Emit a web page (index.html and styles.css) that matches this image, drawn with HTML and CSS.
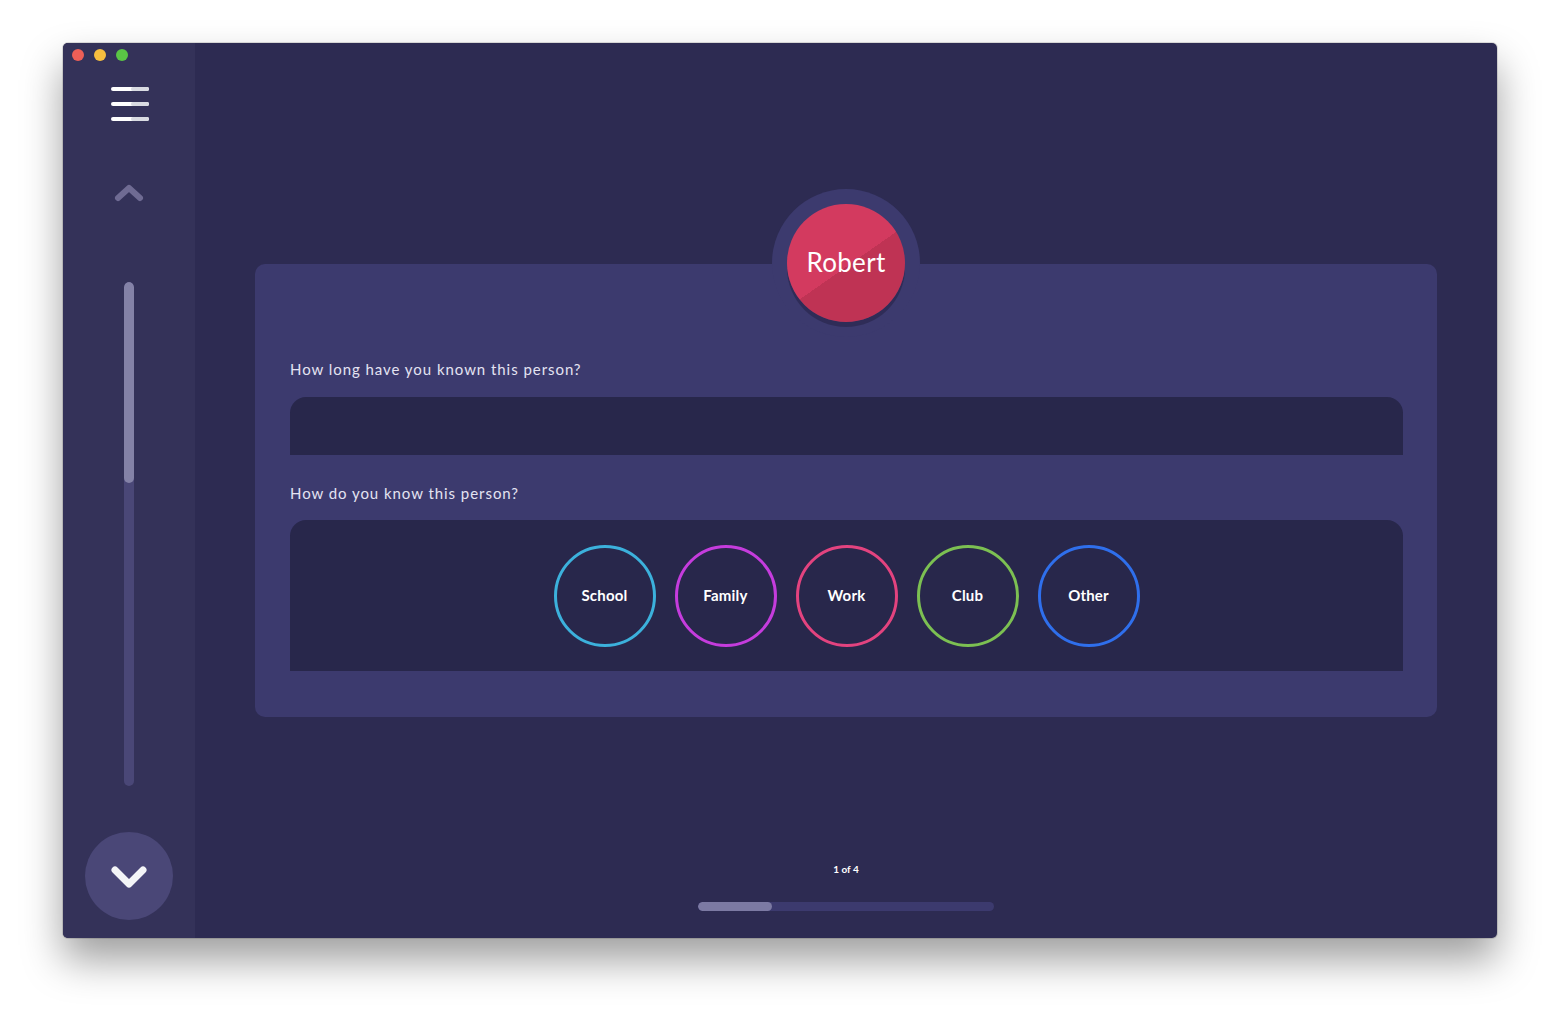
FILE: index.html
```html
<!DOCTYPE html>
<html lang="en">
<head>
<meta charset="utf-8">
<title>Robert</title>
<link rel="stylesheet" href="styles.css">
</head>
<body>
<div class="window">
  <div class="lights">
    <span class="light red"></span>
    <span class="light yellow"></span>
    <span class="light green"></span>
  </div>
  <aside class="sidebar">
    <svg class="hamburger" width="38" height="34" viewBox="0 0 38 34">
      <rect x="0" y="0" width="38" height="4" rx="2" fill="#ffffff"/>
      <rect x="0" y="15" width="38" height="4" rx="2" fill="#ffffff"/>
      <rect x="0" y="30" width="38" height="4" rx="2" fill="#ffffff"/>
      <rect x="20" y="0" width="18" height="4" rx="2" fill="#d9dbe2"/>
      <rect x="20" y="15" width="18" height="4" rx="2" fill="#d9dbe2"/>
      <rect x="20" y="30" width="18" height="4" rx="2" fill="#d9dbe2"/>
    </svg>
    <svg class="chev-up" width="30" height="18" viewBox="0 0 30 18">
      <path d="M4 14 L15 4 L26 14" fill="none" stroke="#6f6b93" stroke-width="6" stroke-linecap="round" stroke-linejoin="round"/>
    </svg>
    <div class="scroll-track"><div class="scroll-thumb"></div></div>
    <div class="spacer"></div>
    <button class="down-btn">
      <svg width="38" height="24" viewBox="0 0 38 24">
        <path d="M5 5 L19 19 L33 5" fill="none" stroke="#f4f5f8" stroke-width="7" stroke-linecap="round" stroke-linejoin="round"/>
      </svg>
    </button>
  </aside>
  <main class="main">
    <section class="card">
      <div class="avatar-halo">
        <div class="avatar"><span>Robert</span></div>
      </div>
      <label class="q-label">How long have you known this person?</label>
      <div class="input-box"></div>
      <label class="q-label second">How do you know this person?</label>
      <div class="options">
        <div class="opt school">School</div>
        <div class="opt family">Family</div>
        <div class="opt work">Work</div>
        <div class="opt club">Club</div>
        <div class="opt other">Other</div>
      </div>
    </section>
    <div class="spacer"></div>
    <footer class="pager">
      <div class="pager-text">1 of 4</div>
      <div class="progress"><div class="progress-fill" style="width:25%"></div></div>
    </footer>
  </main>
</div>
</body>
</html>
```

FILE: styles.css
```css
* { box-sizing: border-box; }
html, body {
  margin: 0;
  width: 1560px;
  height: 1022px;
  background: #ffffff;
  overflow: hidden;
}
body {
  padding: 43px 63px 0 63px;
  font-family: "Lato", "Open Sans", sans-serif;
}
.window {
  position: relative;
  width: 1434px;
  height: 895px;
  display: flex;
  border-radius: 5px;
  overflow: hidden;
  background: #2d2b52;
  box-shadow: 0 22px 40px rgba(0, 0, 0, 0.38), 0 0 0 1px rgba(0,0,0,0.12);
}
.lights {
  position: absolute;
  top: 6px;
  left: 9px;
  display: flex;
  gap: 10px;
}
.light {
  width: 12px;
  height: 12px;
  border-radius: 50%;
  display: block;
}
.red { background: #ee5f57; }
.yellow { background: #f7be3f; }
.green { background: #5ac545; }

.sidebar {
  width: 132px;
  flex: none;
  background: #343259;
  display: flex;
  flex-direction: column;
  align-items: center;
  padding: 44px 0 18px;
}
.hamburger { display: block; margin-left: 1px; }
.chev-up { display: block; margin-top: 63px; }
.scroll-track {
  margin-top: 80px;
  width: 10px;
  height: 504px;
  border-radius: 5px;
  background: #4a4777;
  overflow: hidden;
}
.scroll-thumb {
  width: 10px;
  height: 201px;
  border-radius: 5px;
  background: #8482a7;
}
.spacer { flex: 1; }
.down-btn {
  width: 88px;
  height: 88px;
  border-radius: 50%;
  border: none;
  padding: 0;
  background: #4a4777;
  display: flex;
  align-items: center;
  justify-content: center;
}
.down-btn svg { display: block; margin-top: 2px; }

.main {
  flex: 1;
  display: flex;
  flex-direction: column;
  padding: 221px 60px 27px;
}
.card {
  position: relative;
  background: #3c3a6e;
  border-radius: 10px;
  padding: 95px 34px 46px 35px;
  display: flex;
  flex-direction: column;
}
.avatar-halo {
  position: absolute;
  top: -75px;
  left: 50%;
  margin-left: -74px;
  width: 148px;
  height: 148px;
  border-radius: 50%;
  background: #3c3a6e;
  display: flex;
  align-items: center;
  justify-content: center;
}
.avatar {
  width: 118px;
  height: 118px;
  border-radius: 50%;
  background: linear-gradient(145deg, #d33a5f 0%, #d33a5f 52%, #bf3354 52%, #bf3354 100%);
  box-shadow: 0 5px 0 rgba(30, 28, 60, 0.45);
  display: flex;
  align-items: center;
  justify-content: center;
}
.avatar span {
  color: #ffffff;
  font-size: 26px;
  font-family: "Lato", sans-serif;
  letter-spacing: 0.3px;
  margin-top: -2px;
}
.q-label {
  display: block;
  color: #e4e3f2;
  font-size: 15px;
  line-height: 20px;
  letter-spacing: 0.95px;
  height: 20px;
}
.q-label.second { margin-top: 28px; }
.input-box {
  margin-top: 18px;
  height: 58px;
  background: #28274b;
  border-radius: 16px 16px 0 0;
}
.options {
  margin-top: 17px;
  height: 151px;
  background: #28274b;
  border-radius: 16px 16px 0 0;
  display: flex;
  align-items: center;
  justify-content: center;
  gap: 19px;
}
.opt {
  width: 102px;
  height: 102px;
  border-radius: 50%;
  border: 3px solid #fff;
  display: flex;
  align-items: center;
  justify-content: center;
  color: #ffffff;
  font-weight: 700;
  font-size: 15px;
  letter-spacing: 0.2px;
  padding-bottom: 2px;
}
.school { border-color: #3cb1dc; }
.family { border-color: #c53cdd; }
.work { border-color: #e3437f; }
.club { border-color: #7cc052; }
.other { border-color: #2f6fec; }

.pager {
  display: flex;
  flex-direction: column;
  align-items: center;
}
.pager-text {
  color: #ffffff;
  font-size: 10px;
  font-weight: 700;
  line-height: 14px;
}
.progress {
  margin-top: 26px;
  width: 296px;
  height: 9px;
  border-radius: 5px;
  background: #3c3a6e;
  overflow: hidden;
}
.progress-fill {
  height: 100%;
  border-radius: 5px;
  background: #7c7aa3;
}
```
